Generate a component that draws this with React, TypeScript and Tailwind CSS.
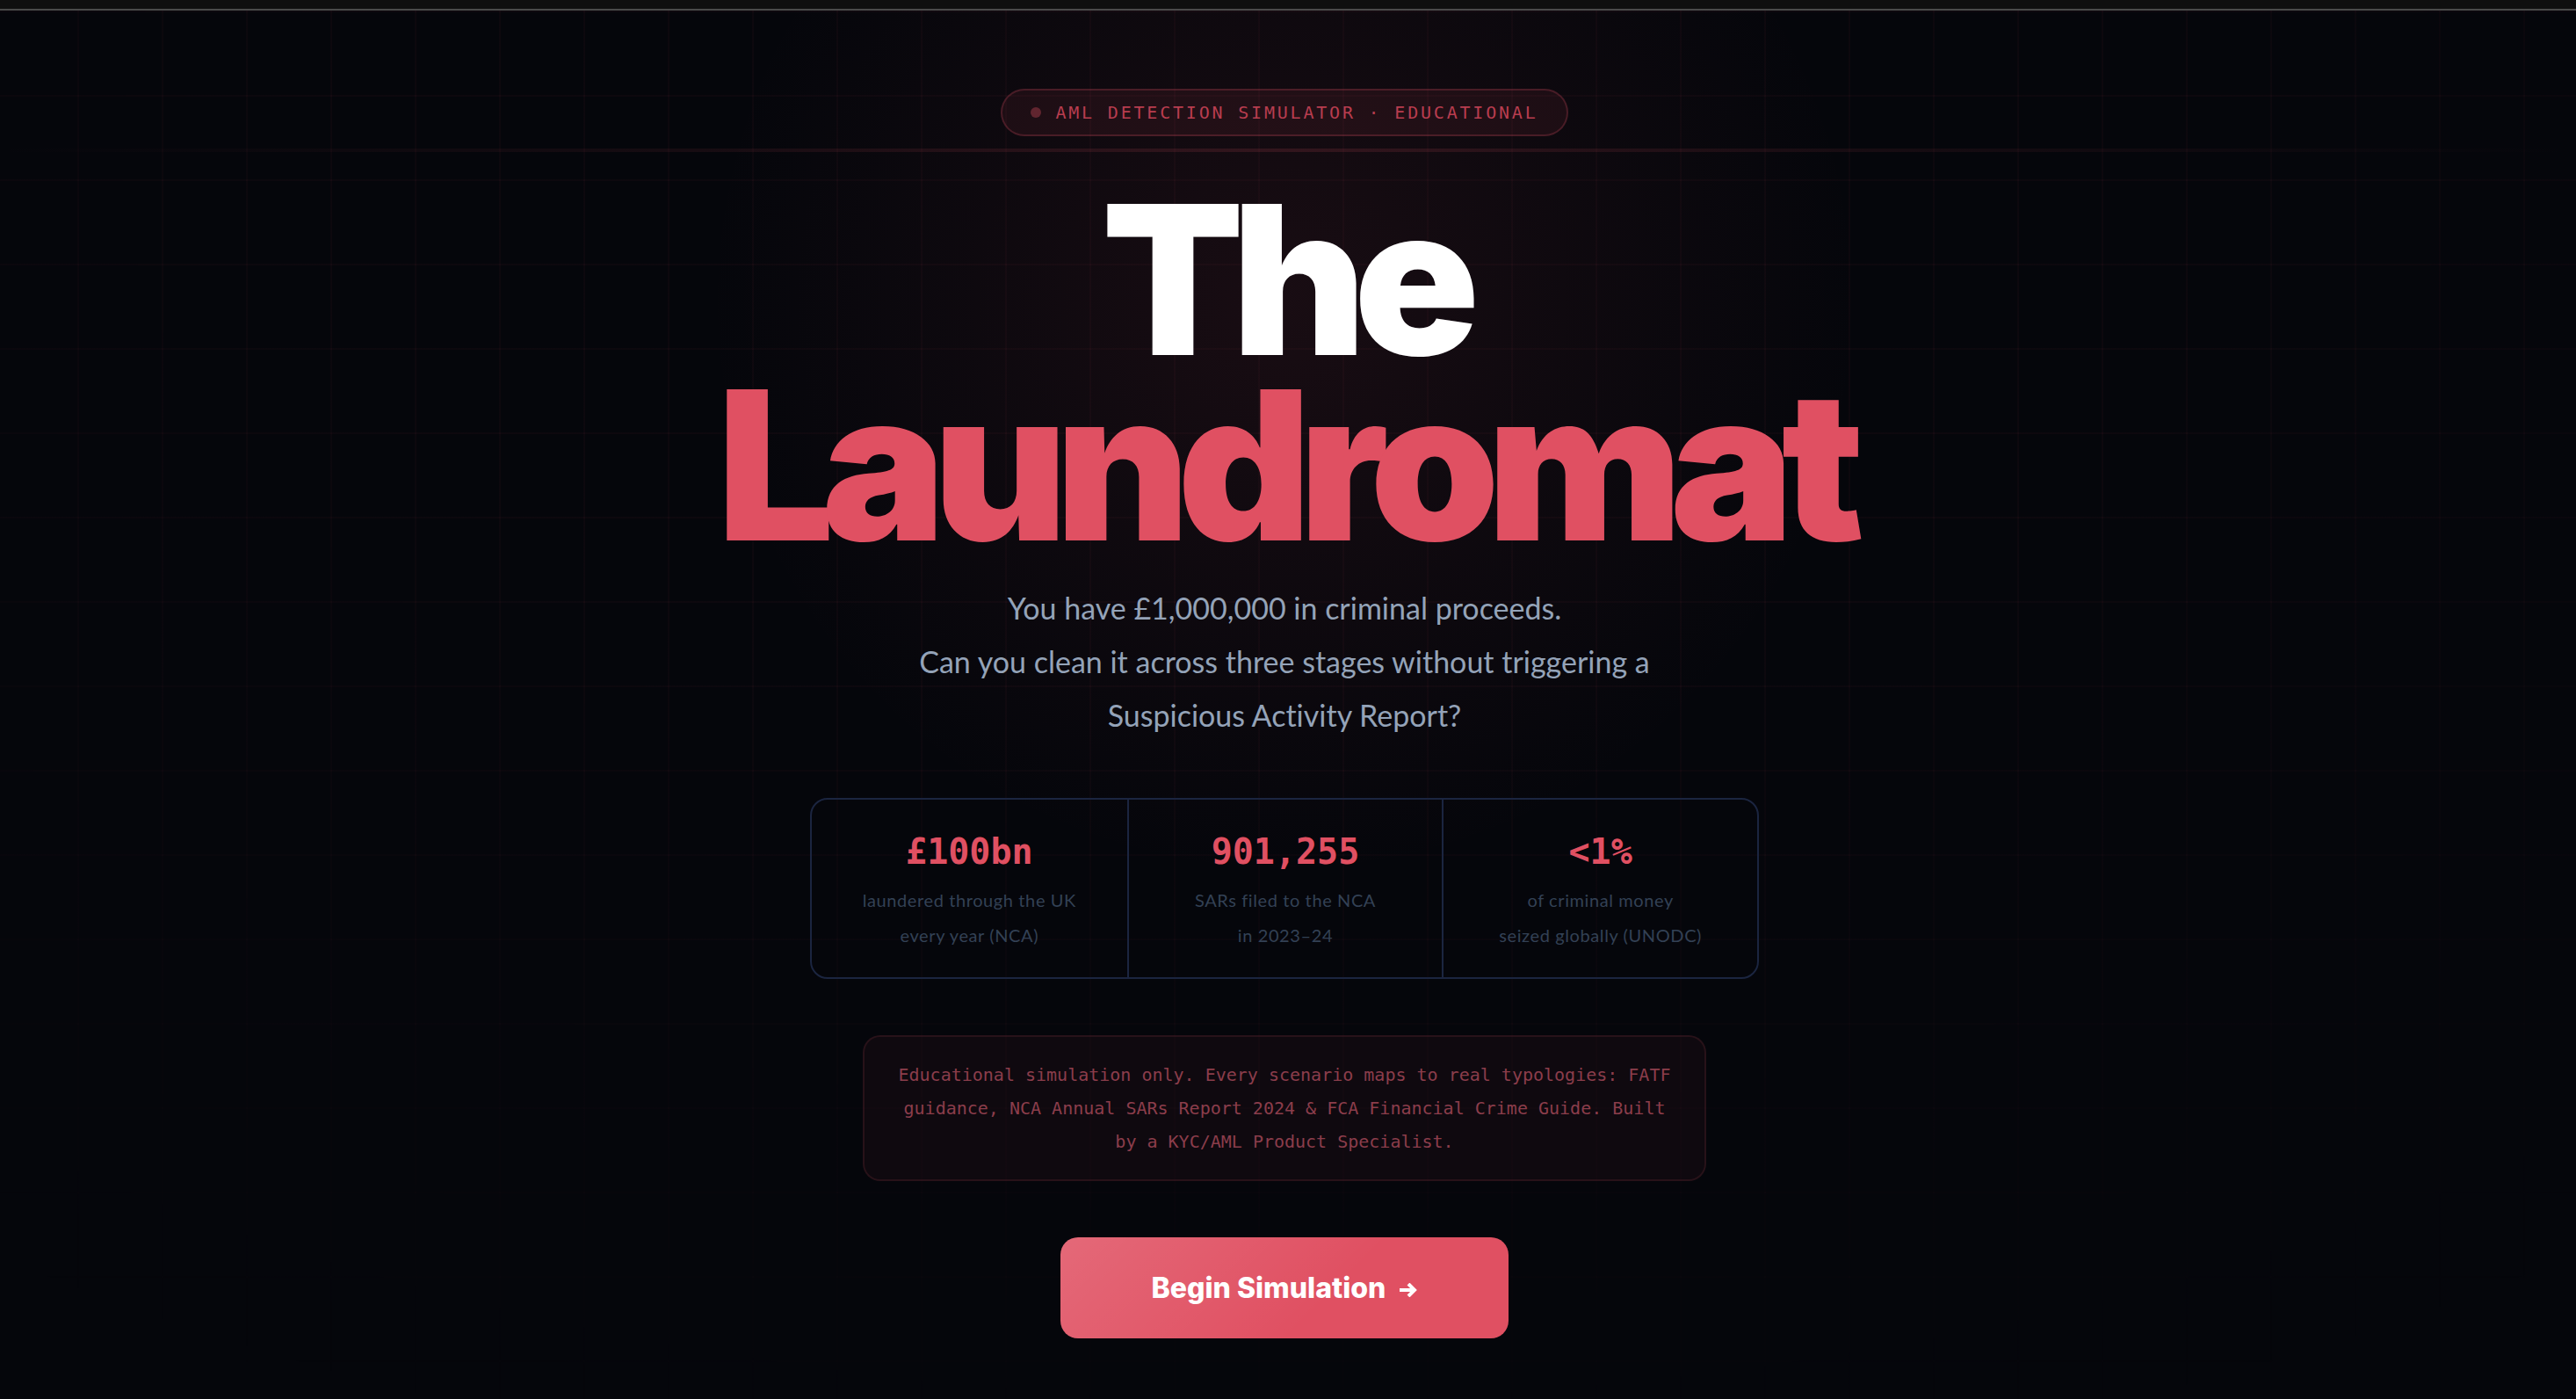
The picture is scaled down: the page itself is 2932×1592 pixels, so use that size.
const stats = [
  { value: '£100bn', lines: ['laundered through the UK', 'every year (NCA)'] },
  { value: '901,255', lines: ['SARs filed to the NCA', 'in 2023–24'] },
  { value: '<1%', lines: ['of criminal money', 'seized globally (UNODC)'] },
];

function Backdrop() {
  return (
    <div aria-hidden="true" className="pointer-events-none absolute inset-0">
      <div className="absolute inset-0 bg-[linear-gradient(rgba(224,80,98,0.04)_2px,transparent_2px),linear-gradient(90deg,rgba(224,80,98,0.04)_2px,transparent_2px)] bg-[size:96px_96px] [mask-image:radial-gradient(ellipse_90%_100%_at_50%_10%,black_40%,transparent_100%)]" />
      <div className="absolute inset-0 bg-[radial-gradient(circle_660px_at_50%_330px,rgba(224,80,98,0.09)_0%,rgba(224,80,98,0.04)_55%,transparent_100%)]" />
      <div className="absolute inset-x-0 top-[157px] h-1 bg-linear-to-r from-transparent via-[#e05062]/15 to-transparent" />
    </div>
  );
}

function Badge() {
  return (
    <div className="flex items-center gap-4 rounded-full border-2 border-[#e05062]/22 bg-[#e05062]/8 px-8 py-3">
      <span className="size-3 rounded-full bg-[#e05062]/35" />
      <span className="font-['DejaVu_Sans_Mono',monospace] text-xl leading-[26px] tracking-[0.14em] text-[#b83d4f]">
        AML DETECTION SIMULATOR · EDUCATIONAL
      </span>
    </div>
  );
}

function Stats() {
  return (
    <dl className="mt-16 grid w-full max-w-[1080px] grid-cols-3 rounded-[20px] border-2 border-[#1b2540] text-center">
      {stats.map((s) => (
        <div key={s.value} className="flex flex-col-reverse justify-end border-[#1b2540] px-4 pt-8 pb-7 not-first:border-l-2">
          <dt className="mt-2 text-xl leading-10 tracking-[0.03em] text-[#334155]">
            {s.lines.map((l) => (
              <span key={l} className="block">
                {l}
              </span>
            ))}
          </dt>
          <dd className="font-['DejaVu_Sans_Mono',monospace] text-[40px] leading-[54px] font-bold text-[#e05062]">{s.value}</dd>
        </div>
      ))}
    </dl>
  );
}

export default function App() {
  return (
    <div className="flex min-h-screen flex-col overflow-hidden bg-[#05060b] font-['Lato',sans-serif] [font-variant-ligatures:none]">
      <header className="h-3 border-b-2 border-[#4a4a4a] bg-[#0f0f0f]" />
      <main className="relative -ml-2 flex flex-1 flex-col items-center pt-[89px] pb-12">
        <Backdrop />
        <div className="relative flex w-full flex-col items-center">
          <Badge />
          <h1 className="mt-[58px] text-center font-['Inter',sans-serif] text-[236px] leading-[211px] font-black tracking-[-0.06em] text-white">
            <span className="block">The</span>
            <span className="block text-[#e05062]">Laundromat</span>
          </h1>
          <p className="mt-[26px] max-w-[900px] text-center text-[34px] leading-[61px] text-[#94a3b8]">
            You have £1,000,000 in criminal proceeds.
            <br />
            Can you clean it across three stages without triggering a Suspicious Activity Report?
          </p>
          <Stats />
          <p className="mt-16 max-w-[960px] rounded-[20px] border-2 border-[#e05062]/12 bg-[#e05062]/5 px-9 py-6 text-center font-['DejaVu_Sans_Mono',monospace] text-xl leading-[38px] text-[#8b3d4b]">
            Educational simulation only. Every scenario maps to real typologies: FATF guidance, NCA Annual SARs Report 2024 &amp; FCA
            Financial Crime Guide. Built by a KYC/AML Product Specialist.
          </p>
          <button
            type="button"
            className="mt-16 flex h-[115px] items-center gap-4 rounded-[20px] bg-[#e05062] bg-[linear-gradient(135deg,rgba(255,255,255,0.14),transparent_60%)] px-[104px] font-['Inter',sans-serif] text-[32px] leading-10 font-extrabold text-white"
          >
            Begin Simulation
            <svg viewBox="0 0 20 16" className="mt-1 h-4 w-5" fill="none" stroke="currentColor" strokeWidth="4" aria-hidden="true">
              <path d="M0 8h16M10 1l7 7-7 7" />
            </svg>
          </button>
        </div>
      </main>
    </div>
  );
}
